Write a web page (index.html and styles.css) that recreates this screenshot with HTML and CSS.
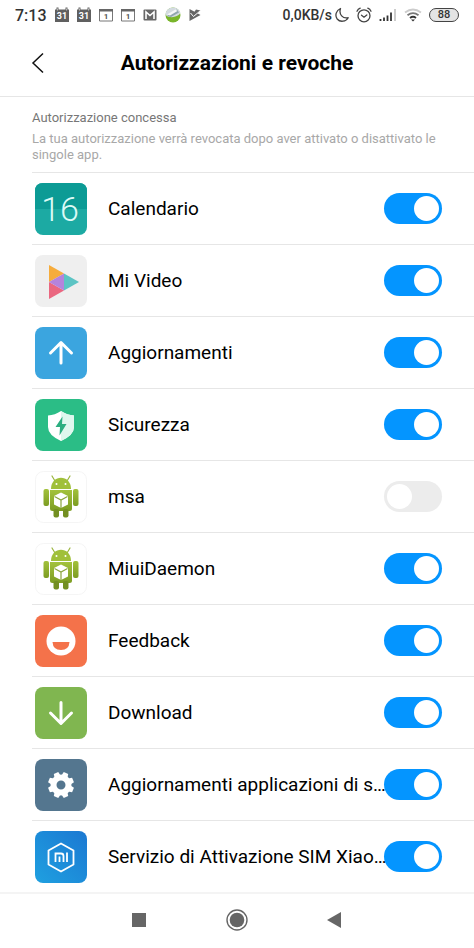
FILE: index.html
```html
<!DOCTYPE html>
<html lang="it">
<head>
<meta charset="utf-8">
<meta name="viewport" content="width=device-width, initial-scale=1">
<title>Autorizzazioni e revoche</title>
<link rel="stylesheet" href="styles.css">
</head>
<body>
<svg class="defs" aria-hidden="true">
  <defs>
    <linearGradient id="droid-green" x1="0" y1="0" x2="0" y2="1">
      <stop offset="0" stop-color="#a3c23c"/><stop offset="1" stop-color="#7c9c22"/>
    </linearGradient>
    <linearGradient id="sim-blue" x1="0" y1="1" x2="1" y2="0">
      <stop offset="0" stop-color="#1fa0e0"/><stop offset="1" stop-color="#1b78d2"/>
    </linearGradient>
    <symbol id="cal31" viewBox="0 0 14 16">
      <path d="M0 2.500h1.500V.5h2v2h7v-2h2v2H14V15H0z" fill="#606060"/>
      <path d="M2.500 1.500v2M11.500 1.500v2" stroke="#bbb" stroke-width="1"/>
      <text x="7" y="12" text-anchor="middle" class="cal-num">31</text>
    </symbol>
    <symbol id="cal1" viewBox="0 0 14 14">
      <path d="M.5 1.500h13v11.500H.5z" fill="#fff" stroke="#777"/>
      <path d="M0 1h14v2.500H0z" fill="#666"/>
      <text x="7" y="11" text-anchor="middle" class="cal-one">1</text>
    </symbol>
    <symbol id="droid" viewBox="0 0 52 52">
      <rect x=".5" y=".5" width="51" height="51" rx="8" fill="#fff" stroke="#f5f5f5"/>
      <path d="M20 10l-3-5M32 10l3-5" stroke="#9ab53d" stroke-width="1.200" stroke-linecap="round"/>
      <path d="M16 18C16 3 36 3 36 18z" fill="#a0c03a"/>
      <circle cx="21.500" cy="13" r="1" fill="#fff"/><circle cx="30.500" cy="13" r="1" fill="#fff"/>
      <g fill="url(#droid-green)">
        <rect x="8.500" y="18" width="5.500" height="17" rx="2"/>
        <rect x="38" y="18" width="5.500" height="17" rx="2"/>
        <path d="M15 19h22v18.500q0 2.500-2.500 2.500h-17q-2.500 0-2.500-2.500z"/>
      </g>
      <rect x="18.500" y="38" width="5.500" height="8.500" rx="2" fill="#738f22"/>
      <rect x="28" y="38" width="5.500" height="8.500" rx="2" fill="#738f22"/>
      <path d="M26 21.500l7 3.500v8.500L26 37l-7-3.500V25z" fill="#fff"/>
      <path d="M19.500 25.500L26 29l6.500-3.500M26 29v8" fill="none" stroke="#8ba53e" stroke-width="1.200"/>
    </symbol>
  </defs>
</svg>
<div class="screen">
  <div class="status">
    <div class="status-left">
      <span class="clock">7:13</span>
      <svg width="14" height="16"><use href="#cal31"/></svg>
      <svg width="14" height="16"><use href="#cal31"/></svg>
      <svg width="14" height="14"><use href="#cal1"/></svg>
      <svg width="14" height="14"><use href="#cal1"/></svg>
      <svg width="14" height="12" viewBox="0 0 14 12"><rect x=".5" y=".5" width="13" height="11" rx="1" fill="#666"/><path d="M3 10V3l4 3.500L11 3v7" fill="none" stroke="#fff" stroke-width="1.600"/></svg>
      <svg width="16" height="16" viewBox="0 0 16 16"><circle cx="8" cy="8" r="7.500" fill="#79b52b"/><path d="M.6 8C0 4 4 .5 8 .5c4 0 7 2.500 7.400 5.500C13 10 5 12 .6 8z" fill="#d3dbe0"/><path d="M2 9l10-6.500 2 3L6 10z" fill="#8fa5ae"/><path d="M2 7.500l8.500-5 2 1.500L5 8.500z" fill="#f4f6f7"/></svg>
      <svg width="12" height="14" viewBox="0 0 12 14"><path d="M.5 1l11 6-11 6z" fill="#666"/><path d="M7 1.500l4.500 1L6 8 4 6z" fill="#666"/><path d="M1.500 5L4.500 8.500 11.500 2.500" fill="none" stroke="#fff" stroke-width="1"/></svg>
    </div>
    <div class="status-right">
      <span class="speed">0,0KB/s</span>
      <svg width="14" height="16" viewBox="0 0 14 16"><path d="M5.500 1.500C1 3.500-.3 8.500 2.200 12c3 3.600 8.800 2.700 11-1.300C8 12 3.500 7.500 5.500 1.500z" fill="none" stroke="#444" stroke-width="1.300" stroke-linejoin="round"/></svg>
      <svg width="16" height="16" viewBox="0 0 16 16" fill="none" stroke="#444" stroke-width="1.300" stroke-linecap="round"><circle cx="8" cy="8.800" r="6"/><path d="M1 4.200Q2 2 4.200 1.200M15 4.200Q14 2 11.800 1.200M5.500 8.200L8 10.200l2.800-2.200"/></svg>
      <svg width="18" height="14" viewBox="0 0 18 14"><path d="M1.500 11v2M5 9.500V13M8.500 7.500V13M12 4.500V13" stroke="#333" stroke-width="1.800"/><path d="M16 1v12" stroke="#ccc" stroke-width="2"/></svg>
      <svg width="18" height="14" viewBox="0 0 18 14" fill="none" stroke-width="1.800"><path d="M1 4.500Q9-1.500 17 4.500" stroke="#ccc"/><path d="M3.500 7.200Q9 3 14.500 7.200" stroke="#777"/><path d="M6 10Q9 7.600 12 10" stroke="#333"/><path d="M7 11.500h4l-2 2z" fill="#333"/></svg>
      <span class="battery">88</span>
    </div>
  </div>

  <header class="header">
    <button class="back" type="button" aria-label="Indietro">
      <svg width="14" height="22" viewBox="0 0 14 22"><path d="M12 1.500L2 11l10 9.500" fill="none" stroke="#111" stroke-width="1.500"/></svg>
    </button>
    <h1>Autorizzazioni e revoche</h1>
  </header>

  <main>
    <section class="intro">
      <h2>Autorizzazione concessa</h2>
      <p>La tua autorizzazione verrà revocata dopo aver attivato o disattivato le singole app.</p>
    </section>
    <ul class="list">
      <li class="row">
        <svg class="app" viewBox="0 0 52 52"><rect width="52" height="52" rx="8" fill="#1caaa3"/><path d="M0 26V8q0-8 8-8h36q8 0 8 8v18z" fill="#0c9b95"/><text x="25" y="38" text-anchor="middle" class="cal-big">16</text></svg>
        <label for="a1">Calendario</label><input id="a1" type="checkbox" role="switch" checked>
      </li>
      <li class="row">
        <svg class="app" viewBox="0 0 52 52"><rect width="52" height="52" rx="8" fill="#efefef"/><path d="M14 10l15 8.500L14 27z" fill="#f6ac3c"/><path d="M29 18.500L44 27l-15 8.500z" fill="#5cc4c4"/><path d="M14 27l15 8.500L14 44z" fill="#ea6780"/><path d="M14 27l15-8.500v17z" fill="#b583dc"/></svg>
        <label for="a2">Mi Video</label><input id="a2" type="checkbox" role="switch" checked>
      </li>
      <li class="row">
        <svg class="app" viewBox="0 0 52 52"><rect width="52" height="52" rx="8" fill="#3ba5df"/><path d="M26 36V16M15.500 26L26 15.500 36.500 26" fill="none" stroke="#fff" stroke-width="3" stroke-linecap="round" stroke-linejoin="round"/></svg>
        <label for="a3">Aggiornamenti</label><input id="a3" type="checkbox" role="switch" checked>
      </li>
      <li class="row">
        <svg class="app" viewBox="0 0 52 52"><rect width="52" height="52" rx="8" fill="#2bbd86"/><path d="M26 12q6 4 13 4.500V28q0 8-13 14-13-6-13-14V16.500Q20 16 26 12z" fill="#fff"/><path d="M26 12q6 4 13 4.500V28q0 8-13 14z" fill="#dff7ee"/><path d="M27.500 17.500L20.500 28H25l-.5 8.500L31.500 25H27z" fill="#2bae80"/></svg>
        <label for="a4">Sicurezza</label><input id="a4" type="checkbox" role="switch" checked>
      </li>
      <li class="row">
        <svg class="app"><use href="#droid"/></svg>
        <label for="a5">msa</label><input id="a5" type="checkbox" role="switch">
      </li>
      <li class="row">
        <svg class="app"><use href="#droid"/></svg>
        <label for="a6">MiuiDaemon</label><input id="a6" type="checkbox" role="switch" checked>
      </li>
      <li class="row">
        <svg class="app" viewBox="0 0 52 52"><rect width="52" height="52" rx="8" fill="#f4724a"/><circle cx="26" cy="26" r="14.500" fill="#fff"/><path d="M17.500 27h17q-.5 8-8.500 8t-8.500-8z" fill="#f4724a"/></svg>
        <label for="a7">Feedback</label><input id="a7" type="checkbox" role="switch" checked>
      </li>
      <li class="row">
        <svg class="app" viewBox="0 0 52 52"><rect width="52" height="52" rx="8" fill="#80b650"/><path d="M26 15.500V36M15.500 26L26 36.500 36.500 26" fill="none" stroke="#fff" stroke-width="3" stroke-linecap="round" stroke-linejoin="round"/></svg>
        <label for="a8">Download</label><input id="a8" type="checkbox" role="switch" checked>
      </li>
      <li class="row">
        <svg class="app" viewBox="0 0 52 52"><rect width="52" height="52" rx="8" fill="#54768f"/><circle cx="26" cy="26" r="7.500" fill="none" stroke="#fff" stroke-width="6"/><g fill="#fff"><path id="tooth" d="M22.800 17l.8-4h4.800l.8 4z" transform="rotate(22.500 26 26)"/><use href="#tooth" transform="rotate(45 26 26)"/><use href="#tooth" transform="rotate(90 26 26)"/><use href="#tooth" transform="rotate(135 26 26)"/><use href="#tooth" transform="rotate(180 26 26)"/><use href="#tooth" transform="rotate(225 26 26)"/><use href="#tooth" transform="rotate(270 26 26)"/><use href="#tooth" transform="rotate(315 26 26)"/></g></svg>
        <label for="a9">Aggiornamenti applicazioni di s…</label><input id="a9" type="checkbox" role="switch" checked>
      </li>
      <li class="row">
        <svg class="app" viewBox="0 0 52 52"><rect width="52" height="52" rx="8" fill="url(#sim-blue)"/><path d="M26 12.500l12.500 7v14L26 40.500l-12.500-7v-14z" fill="none" stroke="#fff" stroke-width="1.800" stroke-linejoin="round"/><path d="M20.500 31v-8.500h5.500q2.500 0 2.500 2.500v6M24.500 25.500V31M32 21.500V31" fill="none" stroke="#fff" stroke-width="1.800"/></svg>
        <label for="a10">Servizio di Attivazione SIM Xiao…</label><input id="a10" type="checkbox" role="switch" checked>
      </li>
    </ul>
  </main>

  <nav class="nav">
    <button type="button" aria-label="Recenti"><svg width="24" height="24" viewBox="0 0 24 24"><path d="M5 5h14v14H5z" fill="#666"/></svg></button>
    <button type="button" aria-label="Home"><svg width="24" height="24" viewBox="0 0 24 24"><circle cx="12" cy="12" r="10" fill="none" stroke="#666" stroke-width="1.400"/><circle cx="12" cy="12" r="7.300" fill="#666"/></svg></button>
    <button type="button" aria-label="Indietro"><svg width="24" height="24" viewBox="0 0 24 24"><path d="M18 4v16L4 12z" fill="#666"/></svg></button>
  </nav>
</div>
</body>
</html>
```
FILE: styles.css
```css
* {
  box-sizing: border-box;
}

body {
  margin: 0;
  background: #fff;
  color: #000;
  font-family: Roboto, "Liberation Sans", sans-serif;
}

.defs {
  position: absolute;
  width: 0;
  height: 0;
}

.screen {
  display: flex;
  flex-direction: column;
  min-height: 100vh;
}

svg {
  display: block;
  flex: none;
}

button {
  border: 0;
  padding: 0;
  background: none;
}

.status,
.status-left,
.status-right {
  display: flex;
  align-items: center;
}

.status {
  justify-content: space-between;
  height: 30px;
  padding: 0 15px;
  color: #333;
  font-weight: 500;
}

.status-left {
  gap: 8px;
}

.status-right {
  gap: 7px;
}

.clock {
  font-size: 16px;
}

.speed {
  font-size: 14px;
  margin-right: -4px;
}

.battery {
  width: 30px;
  height: 14px;
  border: 1px solid #444;
  border-radius: 7px;
  background: #e4e4e4;
  font-size: 11px;
  line-height: 12px;
  text-align: center;
}

.cal-num {
  font-size: 9px;
  font-weight: 700;
  fill: #fff;
}

.cal-one {
  font-size: 8px;
  font-weight: 700;
  fill: #555;
}

.cal-big {
  font-size: 34px;
  font-weight: 300;
  fill: #dcfaf6;
}

.header {
  display: grid;
  grid-template-columns: 44px 1fr 44px;
  align-items: center;
  height: 67px;
  padding: 0 16px;
  border-bottom: 1px solid #e6e6e6;
}

.back {
  display: grid;
  place-items: center;
  height: 44px;
}

h1 {
  margin: 0;
  font-size: 21px;
  font-weight: 700;
  line-height: 28px;
  text-align: center;
}

.intro {
  padding: 12px 32px 9px;
  font-size: 13px;
}

.intro h2 {
  margin: 0 0 4px;
  color: #777;
  font-size: 13px;
  font-weight: 400;
  line-height: 18px;
}

.intro p {
  margin: 0;
  color: #a8a8a8;
  line-height: 16px;
}

.list {
  margin: 0 0 0 32px;
  padding: 0;
  list-style: none;
}

.row {
  display: flex;
  align-items: center;
  height: 72px;
  padding: 0 32px 0 3px;
  border-top: 1px solid #e6e6e6;
}

.app {
  width: 52px;
  height: 52px;
}

.row label {
  flex: 1;
  min-width: 0;
  margin-left: 21px;
  overflow: hidden;
  font-size: 19px;
  line-height: 28px;
  text-overflow: ellipsis;
  white-space: nowrap;
}

.row input {
  appearance: none;
  display: flex;
  flex: none;
  align-items: center;
  width: 58px;
  height: 31px;
  margin: 0 0 0 -12px;
  padding: 3px;
  border-radius: 16px;
  background: #ececec;
  z-index: 1;
}

.row input::before {
  content: "";
  width: 25px;
  height: 25px;
  border-radius: 50%;
  background: #fff;
}

.row input:checked {
  justify-content: flex-end;
  background: #0495ff;
}

.nav {
  display: flex;
  flex: 1;
  align-items: center;
  justify-content: center;
  gap: 74px;
  min-height: 56px;
  padding-bottom: 2px;
  border-top: 2px solid #f4f4f4;
}
```
